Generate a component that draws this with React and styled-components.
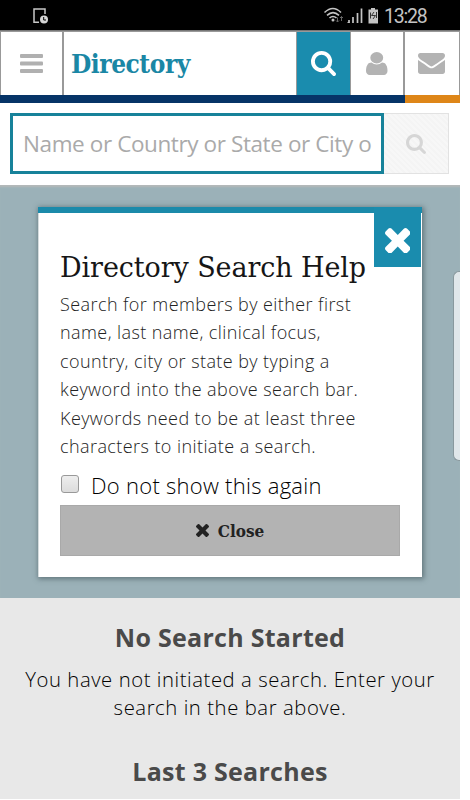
import React from "react";
import styled, { createGlobalStyle } from "styled-components";

const Global = createGlobalStyle`
  * { box-sizing: border-box; }
  body { margin: 0; background: #fff; font-family: "Open Sans", "Noto Sans", sans-serif; }
  h1, h2, h3, p { margin: 0; }
`;

const slab = `"Roboto Slab", "DejaVu Serif Condensed", "DejaVu Serif", serif`;
const slabWide = `"Roboto Slab", "DejaVu Serif", serif`;

const Screen = styled.div`
  width: 460px;
  height: 799px;
  display: flex;
  flex-direction: column;
  overflow: hidden;
  background: #e8e8e8;
`;

const StatusBar = styled.div`
  height: 31px;
  flex: none;
  display: flex;
  align-items: flex-start;
  background: #000;
  padding: 0 33px;
  border-bottom: 1px solid #777;
`;
const StatusIcons = styled.div`
  display: flex;
  margin-left: auto;
`;
const Clock = styled.span`
  width: 43px;
  padding-top: 5px;
  font: 400 19.5px/24px Roboto, sans-serif;
  letter-spacing: -1.2px;
  color: #c4c4c4;
  white-space: nowrap;
`;

const NavBar = styled.header`
  height: 72px;
  flex: none;
  display: grid;
  grid-template-columns: 64px 233px 54px 54px 55px;
  background: #fff;
`;
const NavCell = styled.div`
  display: flex;
  align-items: center;
  justify-content: ${(p) => (p.$start ? "flex-start" : "center")};
  padding: ${(p) => (p.$start ? "0 0 0 7px" : "0 2px 0 0")};
  border-top: 1px solid #999;
  border-bottom: 8px solid ${(p) => p.$bar || "#063467"};
  background: ${(p) => p.$bg || "#fff"};
  box-shadow: inset ${(p) => p.$left || 0}px 0 #999, inset -${(p) => p.$right || 0}px 0 #999;
`;
const Title = styled.h1`
  font: 700 26px/36px ${slab};
  letter-spacing: -0.45px;
  color: #1a87a5;
`;

const SearchBar = styled.div`
  height: 82px;
  flex: none;
  display: flex;
  padding: 10px 11px 11px 10px;
  background: #fff;
`;
const Field = styled.div`
  width: 374px;
  height: 61px;
  flex: none;
  padding-left: 10px;
  border: 3px solid #17829a;
  background: #fff;
  color: #aaa;
  font-size: 22.5px;
  line-height: 55px;
  letter-spacing: -0.4px;
  white-space: nowrap;
`;
const FieldButton = styled.div`
  width: 65px;
  height: 61px;
  display: flex;
  align-items: center;
  justify-content: center;
  border: 1px solid #e2e2e2;
  border-left: 0;
  background: repeating-linear-gradient(45deg, #f7f7f7 0 2px, #f4f4f4 2px 4px);
`;

const Stage = styled.main`
  position: relative;
  height: 413px;
  flex: none;
  padding: 22px 38px 0;
  background: #9bb1b8;
  box-shadow: inset 0 3px 2px -1px #b5b9b9;
`;
const Card = styled.section`
  position: relative;
  height: 370px;
  padding: 37px 22px 0;
  border-top: 6px solid #1b8aaa;
  background: #fff;
  box-shadow: inset 1px 0 #d5dcde, 1px 1px 5px 1px rgba(60, 80, 85, 0.6);
`;
const CornerClose = styled.div`
  position: absolute;
  top: -6px;
  right: 1px;
  width: 47px;
  height: 60px;
  display: flex;
  align-items: center;
  justify-content: center;
  padding-top: 7px;
  background: #1a8cae;
`;
const CardTitle = styled.h2`
  font: 400 27px/36px ${slabWide};
  letter-spacing: -0.1px;
  color: #161616;
  white-space: nowrap;
`;
const Help = styled.p`
  margin-top: 3.5px;
  font-size: 18px;
  font-weight: 300;
  line-height: 28.5px;
  letter-spacing: 0.42px;
  color: #222;
  white-space: nowrap;
`;
const Line = styled.span`
  display: block;
`;
const CheckRow = styled.div`
  height: 44.5px;
  display: flex;
  align-items: center;
  gap: 12px;
  padding: 5px 0 0 1px;
  font-size: 22px;
  font-weight: 300;
  letter-spacing: 0.27px;
  color: #000;
  white-space: nowrap;
`;
const Box = styled.span`
  width: 18px;
  height: 18px;
  margin-top: -3px;
  border: 1px solid #999;
  border-radius: 3px;
  background: linear-gradient(#eee, #dcdcdc);
`;
const CloseButton = styled.div`
  height: 51px;
  display: flex;
  align-items: center;
  justify-content: center;
  gap: 9px;
  background: #b3b3b3;
  border: 1px solid #a9a9a9;
  color: #222;
  font: 700 17px/24px ${slab};
`;
const EdgeHandle = styled.div`
  position: absolute;
  top: 86px;
  right: 0;
  width: 7px;
  height: 190px;
  border: 1px solid #89999e;
  border-right: 0;
  border-radius: 6px 0 0 6px;
  background: #e0e7ea;
`;

const Results = styled.section`
  flex: 1;
  padding-top: 20.5px;
  text-align: center;
  white-space: nowrap;
  color: #000;
  background: #e8e8e8;
`;
const Heading = styled.h3`
  font-size: 25px;
  font-weight: 700;
  line-height: 36px;
  letter-spacing: 0.28px;
  color: #4a4a4a;
`;
const Message = styled.p`
  padding: 10px 0 31.5px;
  font-size: 20.3px;
  font-weight: 300;
  line-height: 28.5px;
  letter-spacing: 0.57px;
`;

const icons = {
  search: ["0 0 1664 1664", "M1152 704q0-185-131.5-316.5t-316.5-131.5-316.5 131.5-131.5 316.5 131.5 316.5 316.5 131.5 316.5-131.5 131.5-316.5zm512 832q0 52-38 90t-90 38q-54 0-90-38l-343-342q-179 124-399 124-143 0-273.5-55.5t-225-150-150-225-55.5-273.5 55.5-273.5 150-225 225-150 273.5-55.5 273.5 55.5 225 150 150 225 55.5 273.5q0 220-124 399l343 343q37 37 37 90z"],
  user: ["256 128 1280 1536", "M1536 1399q0 109-62.5 187t-150.5 78h-854q-88 0-150.5-78t-62.5-187q0-85 8.500-160.500t31.500-152 58.500-131 94-89 134.500-34.500q131 128 313 128t313-128q76 0 134.500 34.500t94 89 58.500 131 31.500 152 8.500 160.500zm-256-887q0 159-112.500 271.500t-271.500 112.500-271.500-112.500-112.500-271.500 112.500-271.500 271.500-112.500 271.500 112.500 112.500 271.500z"],
  mail: ["0 256 1792 1408", "M1792 710v794q0 66-47 113t-113 47h-1472q-66 0-113-47t-47-113v-794q44 49 101 87 362 246 497 345 57 42 92.5 65.5t94.5 48 110 24.5h2q51 0 110-24.5t94.5-48 92.5-65.5q170-123 498-345 57-39 100-87zm0-294q0 79-49 151t-122 123q-376 261-468 325-10 7-42.5 31t-54 38.5-52 32.5-57.5 27-50 9h-2q-23 0-50-9t-57.5-27-52-32.5-54-38.5-42.5-31q-91-64-262-182.5t-205-142.5q-62-42-117-115.5t-55-136.5q0-78 41.5-130t118.5-52h1472q65 0 112.5 47t47.5 113z"],
  times: ["302 366 1188 1188", "M1490 1322q0 40-28 68l-136 136q-28 28-68 28t-68-28l-294-294-294 294q-28 28-68 28t-68-28l-136-136q-28-28-28-68t28-68l294-294-294-294q-28-28-28-68t28-68l136-136q28-28 68-28t68 28l294 294 294-294q28-28 68-28t68 28l136 136q28 28 28 68t-28 68l-294 294 294 294q28 28 28 68z"],
};

function Icon({ name, w, h = w, color }) {
  const [viewBox, d] = icons[name];
  return (
    <svg width={w} height={h} viewBox={viewBox} preserveAspectRatio="none" fill={color}>
      <path d={d} />
    </svg>
  );
}

function NoteIcon() {
  return (
    <svg width="16" height="31" viewBox="33 0 16 31" fill="none" stroke="#c8c8c8" strokeWidth="1.5">
      <path d="M45 14V9H34v13.2h5" />
      <circle cx="44" cy="19.5" r="4" fill="#d5d5d5" stroke="none" />
      <path d="M43.7 17v3h2.3" stroke="#000" strokeWidth="1" />
    </svg>
  );
}

function SignalIcons() {
  return (
    <svg width="61" height="30" viewBox="324 0 61 30" fill="none" stroke="#c4c4c4">
      <path
        d="M325.5 12.5Q334 4.500 342 12.500M328 15.300Q334 9.800 340 15.300M330.500 18Q334 15 337.500 18"
        strokeWidth="1.6"
      />
      <circle cx="334" cy="20" r="1.5" fill="#c4c4c4" stroke="none" />
      <path d="M338.5 22v-4.500M337 20.500l1.500 1.500 1.500-1.500M342.500 16.500V21M341 18l1.500-1.500L344 18" stroke="#666" />
      <path d="M350 23v-3M354 23v-6M358.500 23V13M362.500 23V8.500" strokeWidth="1.7" />
      <path d="M348.5 22.500h2" />
      <path d="M369.500 9.500h2.500V8h4v1.500h3v14h-9.500z" fill="#c4c4c4" stroke="none" />
      <path d="M375 12l-2.500 3.500h4L374 19M371.500 12.500v6M377.500 12v6" stroke="#333" />
    </svg>
  );
}

export default function App() {
  return (
    <>
      <Global />
      <Screen>
        <StatusBar>
          <NoteIcon />
          <StatusIcons>
            <SignalIcons />
            <Clock>13:28</Clock>
          </StatusIcons>
        </StatusBar>
        <NavBar>
          <NavCell $left={1} $right={2}>
            <svg width="23" height="19" viewBox="0 0 23 19" fill="#b0b0b0">
              <rect width="23" height="4" rx="1" />
              <rect y="7.5" width="23" height="4" rx="1" />
              <rect y="15" width="23" height="4" rx="1" />
            </svg>
          </NavCell>
          <NavCell $start $right={1}>
            <Title>Directory</Title>
          </NavCell>
          <NavCell $bg="#1a8cae" $right={1}>
            <Icon name="search" w={25} color="#fff" />
          </NavCell>
          <NavCell $right={2}>
            <Icon name="user" w={21.5} h={23} color="#b3b3b3" />
          </NavCell>
          <NavCell $bar="#de8618" $right={1}>
            <Icon name="mail" w={27} h={21} color="#b3b3b3" />
          </NavCell>
        </NavBar>
        <SearchBar>
          <Field>Name or Country or State or City o</Field>
          <FieldButton>
            <Icon name="search" w={20} color="#d6d6d6" />
          </FieldButton>
        </SearchBar>
        <Stage>
          <Card>
            <CornerClose>
              <Icon name="times" w={25.5} color="#fff" />
            </CornerClose>
            <CardTitle>Directory Search Help</CardTitle>
            <Help>
              <Line>Search for members by either first</Line>
              <Line>name, last name, clinical focus,</Line>
              <Line>country, city or state by typing a</Line>
              <Line>keyword into the above search bar.</Line>
              <Line>Keywords need to be at least three</Line>
              <Line>characters to initiate a search.</Line>
            </Help>
            <CheckRow>
              <Box />
              <span>Do not show this again</span>
            </CheckRow>
            <CloseButton>
              <Icon name="times" w={13} color="#222" />
              <span>Close</span>
            </CloseButton>
          </Card>
          <EdgeHandle />
        </Stage>
        <Results>
          <Heading>No Search Started</Heading>
          <Message>
            <Line>You have not initiated a search. Enter your</Line>
            <Line>search in the bar above.</Line>
          </Message>
          <Heading>Last 3 Searches</Heading>
        </Results>
      </Screen>
    </>
  );
}
